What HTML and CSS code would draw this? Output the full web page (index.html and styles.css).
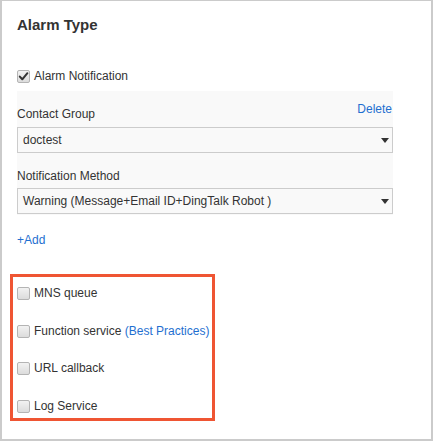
FILE: index.html
```html
<!DOCTYPE html>
<html>
<head>
<meta charset="utf-8">
<link rel="stylesheet" href="styles.css">
</head>
<body>
<div class="card">
  <h2 class="title">Alarm Type</h2>

  <label class="check-row first">
    <span class="box checked">
      <svg width="11" height="11" viewBox="0 0 11 11"><path d="M1.8 5.6 L4.3 8.3 L9.4 2.2" fill="none" stroke="#333" stroke-width="2" stroke-linecap="round" stroke-linejoin="round"/></svg>
    </span>
    <span>Alarm Notification</span>
  </label>

  <div class="panel">
    <div class="label-row">
      <span class="label">Contact Group</span>
      <a class="link delete">Delete</a>
    </div>
    <div class="select">
      <span>doctest</span>
      <span class="arrow"></span>
    </div>
    <div class="label label2">Notification Method</div>
    <div class="select select2">
      <span>Warning (Message+Email ID+DingTalk Robot )</span>
      <span class="arrow"></span>
    </div>
  </div>

  <a class="link add">+Add</a>

  <div class="highlight">
    <label class="check-row"><span class="box"></span><span>MNS queue</span></label>
    <label class="check-row"><span class="box"></span><span>Function service <span class="link">(Best Practices)</span></span></label>
    <label class="check-row"><span class="box"></span><span>URL callback</span></label>
    <label class="check-row"><span class="box"></span><span>Log Service</span></label>
  </div>
</div>
</body>
</html>
```

FILE: styles.css
```css
html, body {
  margin: 0;
  padding: 0;
  background: #fff;
}
body {
  font-family: "Liberation Sans", Arial, sans-serif;
  font-size: 12px;
  line-height: 16px;
  color: #333;
}
.card {
  box-sizing: border-box;
  width: 433px;
  height: 441px;
  border-style: solid;
  border-color: #cbcbcb;
  border-width: 1px 2px 2px 2px;
  padding: 14px 0 0 15px;
  display: flex;
  flex-direction: column;
  align-items: flex-start;
}
.title {
  margin: 0;
  font-size: 15px;
  line-height: 20px;
  font-weight: bold;
  color: #333;
}
.check-row {
  display: flex;
  align-items: center;
  gap: 4px;
  height: 16px;
}
.check-row.first {
  margin-top: 33px;
}
.box {
  box-sizing: border-box;
  width: 13px;
  height: 13px;
  border: 1px solid #b4b4b4;
  border-radius: 2px;
  background: linear-gradient(#f2f2f2, #dcdcdc);
  display: flex;
  align-items: center;
  justify-content: center;
  flex: none;
  margin-top: 1px;
}
.panel {
  margin-top: 7px;
  width: 376px;
  background: #f9f9f9;
  padding: 10px 0 1px 0;
  display: flex;
  flex-direction: column;
}
.label-row {
  display: flex;
  justify-content: space-between;
  align-items: flex-start;
}
.label-row .label {
  margin-top: 5px;
}
.link {
  color: #1f6fd0;
  text-decoration: none;
  cursor: pointer;
}
.delete {
  margin-right: 1px;
}
.select {
  box-sizing: border-box;
  margin-top: 5px;
  width: 376px;
  height: 26px;
  border: 1px solid #cccccc;
  background: #f9f9f9;
  display: flex;
  align-items: center;
  justify-content: space-between;
  padding: 0 3px 0 5px;
}
.select span:first-child {
  color: #333;
}
.arrow {
  width: 0;
  height: 0;
  border-left: 4.5px solid transparent;
  border-right: 4.5px solid transparent;
  border-top: 5px solid #333;
  margin-top: 1px;
}
.label2 {
  margin-top: 15px;
}
.select2 {
  margin-top: 4px;
}
.add {
  margin-top: 17px;
  display: block;
}
.highlight {
  margin-top: 26px;
  margin-left: -7px;
  box-sizing: border-box;
  width: 205px;
  height: 147px;
  border: 3px solid #ef5533;
  padding: 8px 0 0 4px;
  display: flex;
  flex-direction: column;
  gap: 21.67px;
}
```
